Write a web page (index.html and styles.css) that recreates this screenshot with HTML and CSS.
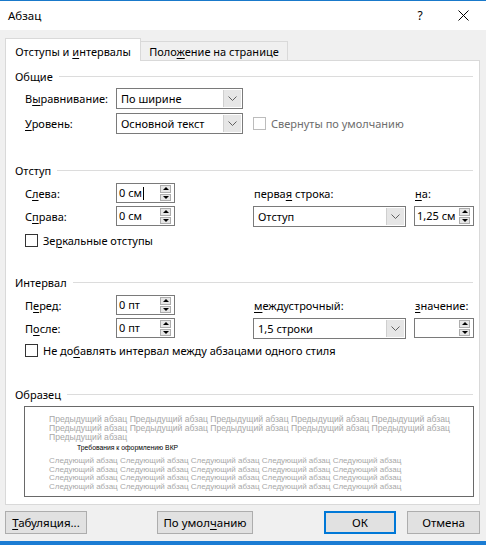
FILE: index.html
```html
<!DOCTYPE html>
<html lang="ru">
<head>
<meta charset="utf-8">
<title>Абзац</title>
<link rel="stylesheet" href="styles.css">
</head>
<body>
<div class="win">
  <div class="titlebar">
    <span class="title">Абзац</span>
    <span class="help">?</span>
    <span class="close"><svg width="11" height="11" viewBox="0 0 11 11"><path d="M0.5 0.5L10.5 10.5M10.5 0.5L0.5 10.5" stroke="#000" stroke-width="1" fill="none"/></svg></span>
  </div>
  <div class="main">
    <div class="tabs">
      <div class="tab active">Отступы и <u>и</u>нтервалы</div>
      <div class="tab">Поло<u>ж</u>ение на странице</div>
    </div>
    <div class="panel">
      <div class="legend lg-general"><span>Общие</span></div>
      <div class="gen-grid">
        <span class="lbl">В<u>ы</u>равнивание:</span>
        <div class="select"><span class="val">По ширине</span><span class="arrow"><svg width="9" height="5" viewBox="0 0 9 5"><path d="M0.5 0.5L4.5 4.5L8.5 0.5" fill="none" stroke="#606060"/></svg></span></div>
        <span></span>
        <span class="lbl"><u>У</u>ровень:</span>
        <div class="select"><span class="val">Основной текст</span><span class="arrow"><svg width="9" height="5" viewBox="0 0 9 5"><path d="M0.5 0.5L4.5 4.5L8.5 0.5" fill="none" stroke="#606060"/></svg></span></div>
        <div class="check disabled"><span class="box"></span><span>Свернуты по умолчанию</span></div>
      </div>

      <div class="legend lg-indent"><span>Отступ</span></div>
      <div class="pair-grid">
        <span class="lbl">С<u>л</u>ева:</span>
        <div class="spin"><span class="val">0 см<i class="caret"></i></span><span class="btns"><span><i class="up"></i></span><span><i class="down"></i></span></span></div>
        <span></span>
        <span class="lbl rl">перва<u>я</u> строка:</span>
        <span class="lbl rl"><u>н</u>а:</span>

        <span class="lbl">С<u>п</u>рава:</span>
        <div class="spin"><span class="val">0 см</span><span class="btns"><span><i class="up"></i></span><span><i class="down"></i></span></span></div>
        <span></span>
        <div class="select wide"><span class="val">Отступ</span><span class="arrow"><svg width="9" height="5" viewBox="0 0 9 5"><path d="M0.5 0.5L4.5 4.5L8.5 0.5" fill="none" stroke="#606060"/></svg></span></div>
        <div class="spin"><span class="val">1,25 см</span><span class="btns"><span><i class="up"></i></span><span><i class="down"></i></span></span></div>
      </div>
      <div class="check row-check c-mirror"><span class="box"></span><span>Зе<u>р</u>кальные отступы</span></div>

      <div class="legend lg-spacing"><span>Интервал</span></div>
      <div class="pair-grid">
        <span class="lbl">П<u>е</u>ред:</span>
        <div class="spin"><span class="val">0 пт</span><span class="btns"><span><i class="up"></i></span><span><i class="down"></i></span></span></div>
        <span></span>
        <span class="lbl rl"><u>м</u>еждустрочный:</span>
        <span class="lbl rl"><u>з</u>начение:</span>

        <span class="lbl">П<u>о</u>сле:</span>
        <div class="spin"><span class="val">0 пт</span><span class="btns"><span><i class="up"></i></span><span><i class="down"></i></span></span></div>
        <span></span>
        <div class="select wide"><span class="val">1,5 строки</span><span class="arrow"><svg width="9" height="5" viewBox="0 0 9 5"><path d="M0.5 0.5L4.5 4.5L8.5 0.5" fill="none" stroke="#606060"/></svg></span></div>
        <div class="spin"><span class="val"></span><span class="btns"><span><i class="up"></i></span><span><i class="down"></i></span></span></div>
      </div>
      <div class="check row-check c-nospace"><span class="box"></span><span>Не до<u>б</u>авлять интервал между абзацами одного стиля</span></div>

      <div class="legend lg-sample"><span>Образец</span></div>
      <div class="sample">
        <div class="s-prev">Предыдущий абзац Предыдущий абзац Предыдущий абзац Предыдущий абзац Предыдущий абзац</div>
        <div class="s-prev">Предыдущий абзац Предыдущий абзац Предыдущий абзац Предыдущий абзац Предыдущий абзац</div>
        <div class="s-prev">Предыдущий абзац</div>
        <div class="s-cur">Требования к оформлению ВКР</div>
        <div class="s-next">Следующий абзац Следующий абзац Следующий абзац Следующий абзац Следующий абзац</div>
        <div class="s-next">Следующий абзац Следующий абзац Следующий абзац Следующий абзац Следующий абзац</div>
        <div class="s-next">Следующий абзац Следующий абзац Следующий абзац Следующий абзац Следующий абзац</div>
        <div class="s-next">Следующий абзац Следующий абзац Следующий абзац Следующий абзац Следующий абзац</div>
      </div>
    </div>
    <div class="buttons">
      <button class="btn b-tabs"><u>Т</u>абуляция...</button>
      <button class="btn b-default">По умол<u>ч</u>анию</button>
      <button class="btn b-ok">ОК</button>
      <button class="btn b-cancel">Отмена</button>
    </div>
  </div>
</div>
</body>
</html>
```
FILE: styles.css
```css
* { box-sizing: border-box; }
html, body { margin: 0; padding: 0; }
body {
  width: 486px;
  height: 545px;
  overflow: hidden;
  background: #f0f0f0;
  font-family: "Noto Sans", "Open Sans", sans-serif;
  font-size: 11px;
  color: #000;
}
u { text-decoration: underline; text-underline-offset: 2px; }

.win {
  height: 545px;
  display: flex;
  flex-direction: column;
  border-bottom: 4px solid #1b7cd3;
}

.titlebar {
  height: 30px;
  flex: none;
  background: #fff;
  border-top: 1px solid #1979ca;
  display: flex;
  align-items: center;
  padding-left: 8px;
  font-size: 11.5px;
}
.title { flex: 1; }
.help { width: 24px; text-align: center; margin-right: 8px; font-size: 12px; }
.close { width: 46px; display: flex; justify-content: center; align-items: center; }

.main {
  flex: 1;
  padding: 8px 6px 0 5px;
  display: flex;
  flex-direction: column;
}

.tabs {
  height: 22px;
  display: flex;
  align-items: flex-end;
}
.tab {
  text-align: center;
  line-height: 17px;
  border: 1px solid #d9d9d9;
  border-bottom: none;
}
.tab.active {
  width: 136px;
  height: 23px;
  margin-bottom: -1px;
  padding-top: 4px;
  background: #fff;
  position: relative;
  z-index: 1;
}
.tab:not(.active) {
  width: 148px;
  height: 19px;
  margin-left: -1px;
  padding-top: 1px;
  background: #f0f0f0;
}

.panel {
  height: 445px;
  flex: none;
  background: #fff;
  border: 1px solid #d9d9d9;
  padding: 0 6px 0 9px;
}

.legend {
  height: 16px;
  display: flex;
  align-items: center;
  gap: 6px;
}
.legend::after {
  content: "";
  flex: 1;
  height: 1px;
  background: #dcdcdc;
}
.lg-general { margin-top: 7px; }
.lg-indent { margin-top: 28px; }
.lg-spacing { margin-top: 26px; }
.lg-sample { margin-top: 28px; }

.lbl { white-space: nowrap; }
.rl { padding-left: 1px; }

.gen-grid {
  margin-top: 4px;
  padding-left: 10px;
  display: grid;
  grid-template-columns: 91px 127px 1fr;
  grid-auto-rows: 21px;
  row-gap: 4px;
  align-items: center;
}
.gen-grid .check { padding-left: 10px; }

.pair-grid {
  margin-top: 5px;
  padding-left: 10px;
  display: grid;
  grid-template-columns: 91px 59px 78px 161px 60px;
  grid-template-rows: 21px 21px;
  row-gap: 2px;
  align-items: center;
}

.select {
  height: 21px;
  display: flex;
  border: 1px solid #7a7a7a;
  background: #fff;
}
.select.wide { width: 153px; }
.select .val { flex: 1; padding-left: 4px; line-height: 19px; white-space: nowrap; }
.select .arrow {
  width: 18px;
  margin: 1px;
  background: #e6e6e6;
  border-left: 1px solid #cfcfcf;
  display: flex;
  align-items: center;
  justify-content: center;
}

.spin {
  height: 20px;
  align-self: start;
  display: flex;
  border: 1px solid #7a7a7a;
  background: #fff;
}
.spin .val { flex: 1; padding-left: 2px; line-height: 18px; white-space: nowrap; display: flex; align-items: center; }
.caret { display: inline-block; width: 1px; height: 13px; background: #000; margin-left: 1px; }
.spin .btns {
  width: 11px;
  margin: 1px 3px 1px 0;
  display: flex;
  flex-direction: column;
  gap: 1px;
}
.spin .btns > span {
  flex: 1;
  background: #e6e6e6;
  border: 1px solid #adadad;
  display: flex;
  align-items: center;
  justify-content: center;
}
.up, .down { width: 0; height: 0; border-left: 3px solid transparent; border-right: 3px solid transparent; }
.up { border-bottom: 3px solid #000; }
.down { border-top: 3px solid #000; }

.check {
  display: flex;
  align-items: center;
  gap: 5px;
  white-space: nowrap;
}
.check .box {
  width: 13px;
  height: 13px;
  border: 1px solid #333;
  background: #fff;
  flex: none;
}
.check.disabled { color: #6d6d6d; }
.check.disabled .box { border-color: #bcbcbc; }
.row-check { height: 16px; padding-left: 10px; }
.c-mirror { margin-top: 5px; }
.c-nospace { margin-top: 3px; }

.sample {
  margin-top: 4px;
  margin-left: 9px;
  width: 450px;
  height: 91px;
  border: 1px solid #696969;
  background: #fff;
  padding: 8px 0 0 24px;
  overflow: hidden;
  font-family: "Liberation Sans", Arial, sans-serif;
  font-size: 8.6px;
  white-space: nowrap;
}
.s-prev, .s-next { color: #a8a8a8; line-height: 9px; }
.s-next { line-height: 8.6px; font-size: 8px; }
.s-cur { color: #000; line-height: 9px; margin: 1px 0 5px 28px; font-size: 6.8px; }

.buttons {
  margin-top: 6px;
  display: flex;
  height: 23px;
}
.btn {
  height: 23px;
  font-family: inherit;
  font-size: 11.5px;
  color: #000;
  background: #e1e1e1;
  border: 1px solid #adadad;
  padding: 0;
}
.b-tabs { width: 82px; }
.b-default { width: 96px; margin-left: 70px; }
.b-ok { width: 72px; margin-left: auto; border: 2px solid #0078d7; }
.b-cancel { width: 73px; margin-left: 11px; }
```
